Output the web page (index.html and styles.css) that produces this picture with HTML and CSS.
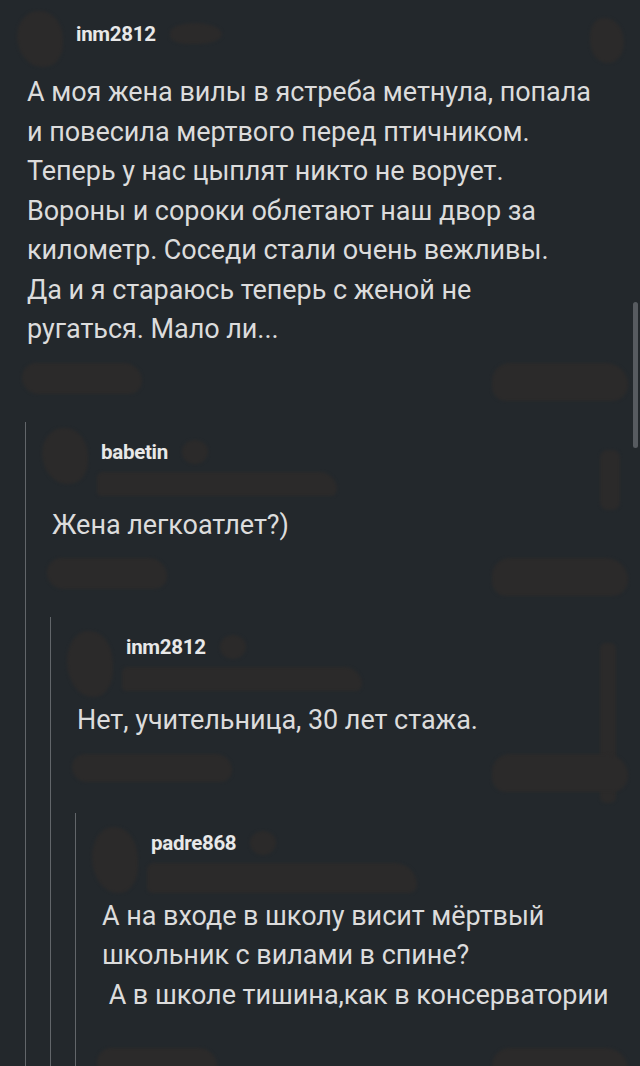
FILE: index.html
```html
<!DOCTYPE html>
<html lang="ru">
<head>
  <meta charset="UTF-8">
  <meta name="viewport" content="width=device-width, initial-scale=1.0">
  <title>Комментарии</title>
  <link rel="stylesheet" href="styles.css">
</head>
<body>
  <div class="scrollbar"></div>

  <div class="thread">
    <!-- top level comment -->
    <div class="comment top">
      <div class="head">
        <div class="avatar"><span class="blob ava"></span></div>
        <div class="meta inline">
          <span class="name">inm2812</span>
          <span class="blob stamp-short"></span>
        </div>
        <span class="blob menu menu-s"></span>
      </div>
      <p class="text">А моя жена вилы в ястреба метнула, попала<br>и повесила мертвого перед птичником.<br>Теперь у нас цыплят никто не ворует.<br>Вороны и сороки облетают наш двор за<br>километр. Соседи стали очень вежливы.<br>Да и я стараюсь теперь с женой не<br>ругаться. Мало ли...</p>
      <div class="actions">
        <span class="blob act-left"></span>
        <span class="blob act-right"></span>
      </div>
    </div>

    <div class="reply r1">
      <div class="comment">
        <div class="head">
          <div class="avatar"><span class="blob ava"></span></div>
          <div class="meta">
            <div class="name-row">
              <span class="name">babetin</span>
              <span class="blob dot"></span>
            </div>
            <span class="blob stamp"></span>
          </div>
          <span class="blob menu menu-thin"></span>
        </div>
        <p class="text">Жена легкоатлет?)</p>
        <div class="actions">
          <span class="blob act-left"></span>
          <span class="blob act-right"></span>
        </div>
      </div>

      <div class="reply r2">
        <div class="comment">
          <div class="head">
            <div class="avatar"><span class="blob ava tall"></span></div>
            <div class="meta">
              <div class="name-row">
                <span class="name">inm2812</span>
                <span class="blob dot"></span>
              </div>
              <span class="blob stamp"></span>
            </div>
            <span class="blob menu menu-long"></span>
          </div>
          <p class="text">Нет, учительница, 30 лет стажа.</p>
          <div class="actions">
            <span class="blob act-left wide"></span>
            <span class="blob act-right"></span>
          </div>
        </div>

        <div class="reply r3">
          <div class="comment">
            <div class="head">
              <div class="avatar"><span class="blob ava tall"></span></div>
              <div class="meta">
                <div class="name-row">
                  <span class="name">padre868</span>
                  <span class="blob dot"></span>
                </div>
                <span class="blob stamp long"></span>
              </div>
            </div>
            <p class="text">А на входе в школу висит мёртвый<br>школьник с вилами в спине?<br>&nbsp;А в школе тишина,как в консерватории</p>
            <div class="actions last">
              <span class="blob act-left"></span>
              <span class="blob act-right"></span>
            </div>
          </div>
        </div>
      </div>
    </div>
  </div>
</body>
</html>
```

FILE: styles.css
```css
/* Page */
* {
  box-sizing: border-box;
}

body {
  margin: 0;
  height: 1066px;
  overflow: hidden;
  position: relative;
  background-color: #23282c;
  color: #dcdddd;
  font-family: Roboto, "Noto Sans", sans-serif;
}

/* Thin scroll indicator on the right edge */
.scrollbar {
  position: absolute;
  top: 302px;
  right: 2px;
  width: 5px;
  height: 146px;
  border-radius: 3px;
  background-color: #575b60;
}

.thread {
  padding-left: 25px;
}

/* Comment block */
.comment {
  padding-left: 2px;
}

.head {
  display: flex;
  align-items: flex-start;
  height: 84px;
  padding-top: 18px;
}

.top .head {
  height: 73px;
  padding-top: 23px;
}

.avatar {
  width: 49px;
  flex: none;
}

.meta {
  display: flex;
  flex-direction: column;
}

.meta.inline,
.name-row {
  display: flex;
  flex-direction: row;
  align-items: center;
}

.name {
  font-size: 20.5px;
  line-height: 20px;
  font-weight: 700;
  color: #e8e8e8;
  letter-spacing: -0.3px;
}

.text {
  margin: 0;
  font-size: 27px;
  line-height: 39.5px;
  white-space: nowrap;
  color: #dcdcdc;
  letter-spacing: -0.05px;
}

.actions {
  display: flex;
  justify-content: space-between;
  height: 72px;
  padding-top: 13px;
  padding-right: 12px;
}

.actions.last {
  height: 100px;
  padding-top: 33px;
}

/* Nested replies with the thread line */
.reply {
  border-left: 1px solid #62666a;
  padding-left: 24px;
}

/* Scribbled-over parts (avatars, dates, buttons) */
.blob {
  display: block;
  flex: none;
  background-color: #2b2a2a;
  filter: blur(1.5px);
}

.ava {
  width: 46px;
  height: 56px;
  margin-left: -10px;
  margin-top: -12px;
  border-radius: 45% 50% 40% 55%;
}

.ava.tall {
  height: 66px;
  margin-top: -4px;
}

.dot {
  width: 26px;
  height: 24px;
  margin-left: 14px;
  border-radius: 50%;
}

.stamp {
  width: 240px;
  height: 24px;
  margin-top: 8px;
  margin-left: -4px;
  border-radius: 12px 40px 14px 10px;
}

.stamp.long {
  width: 270px;
  height: 30px;
}

.stamp-short {
  width: 52px;
  height: 21px;
  margin-left: 14px;
  border-radius: 50% 60% 50% 40%;
}

.menu {
  margin-left: auto;
  margin-right: 16px;
}

.menu-s {
  width: 34px;
  height: 45px;
  margin-top: -5px;
  border-radius: 40% 55% 45% 50%;
}

.menu-thin {
  width: 20px;
  height: 60px;
  margin-top: 10px;
  margin-right: 20px;
  border-radius: 8px;
}

.menu-long {
  width: 16px;
  height: 160px;
  margin-top: 8px;
  margin-right: 24px;
  border-radius: 6px;
}

.act-left {
  width: 120px;
  height: 31px;
  margin-left: -5px;
  border-radius: 16px 20px 14px 18px;
}

.act-left.wide {
  width: 160px;
  height: 28px;
}

.act-right {
  width: 136px;
  height: 38px;
  border-radius: 18px 22px 16px 14px;
}
```
